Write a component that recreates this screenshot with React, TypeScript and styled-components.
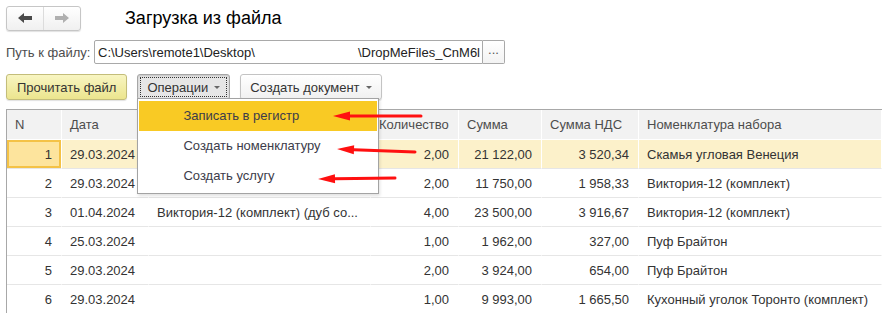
import styled, { createGlobalStyle } from "styled-components";

const GlobalStyle = createGlobalStyle`
  body {
    margin: 0;
    background: #fff;
    font-family: "Liberation Sans", Arial, sans-serif;
    font-size: 13px;
    color: #333;
  }
`;

const Page = styled.div`
  position: relative;
  width: 882px;
  height: 313px;
  overflow: hidden;
`;

const TopBar = styled.div`
  display: flex;
  align-items: center;
  height: 24px;
  padding: 6px 0 0 6px;
`;

const NavGroup = styled.div`
  display: flex;
  width: 73px;
  height: 23px;
  border: 1px solid #c6c6c6;
  border-radius: 3px;
  background: linear-gradient(#ffffff, #f0f0f0);
  box-shadow: 0 1px 1px rgba(0, 0, 0, 0.12);
`;

const NavButton = styled.div<{ $divider?: boolean }>`
  flex: 1;
  display: flex;
  align-items: center;
  justify-content: center;
  border-right: ${(p) => (p.$divider ? "1px solid #dcdcdc" : "none")};
`;

const Title = styled.h1`
  margin: 0 0 0 44px;
  font-size: 18px;
  font-weight: normal;
  color: #000;
  line-height: 24px;
`;

const PathRow = styled.div`
  display: flex;
  align-items: center;
  margin-top: 10px;
  padding-left: 6px;
  height: 24px;
`;

const Label = styled.span`
  color: #4d4d4d;
  width: 88px;
`;

const PathInput = styled.div`
  display: flex;
  justify-content: space-between;
  align-items: center;
  box-sizing: border-box;
  width: 389px;
  height: 24px;
  padding: 0 2px 0 3px;
  border: 1px solid #a9a9a9;
  border-radius: 2px 0 0 2px;
  color: #222;
  white-space: nowrap;
`;

const DotsButton = styled.div`
  box-sizing: border-box;
  width: 22px;
  height: 24px;
  border: 1px solid #a9a9a9;
  border-left: none;
  border-radius: 0 2px 2px 0;
  background: linear-gradient(#fff, #f3f3f3);
  text-align: center;
  line-height: 18px;
  color: #555;
`;

const ButtonsRow = styled.div`
  display: flex;
  align-items: center;
  gap: 10px;
  margin-top: 10px;
  padding-left: 6px;
  height: 26px;
`;

const Button = styled.div<{ $variant?: "primary" | "pressed" | "normal" }>`
  position: relative;
  box-sizing: border-box;
  height: 26px;
  display: flex;
  align-items: center;
  gap: 6px;
  padding: 0 ${(p) => (p.$variant === "primary" ? "10px" : "9px")};
  border-radius: 3px;
  border: 1px solid
    ${(p) => (p.$variant === "primary" ? "#c3bd7a" : p.$variant === "pressed" ? "#a6a6a6" : "#c3c3c3")};
  background: ${(p) =>
    p.$variant === "primary"
      ? "linear-gradient(#f8f5c2, #ece58e)"
      : p.$variant === "pressed"
      ? "#e6e6e6"
      : "linear-gradient(#ffffff, #f0f0f0)"};
  box-shadow: ${(p) => (p.$variant === "pressed" ? "inset 0 1px 2px rgba(0,0,0,0.15)" : "0 1px 1px rgba(0,0,0,0.12)")};
  color: #333;
  white-space: nowrap;
`;

const FocusFrame = styled.div`
  position: absolute;
  inset: 2px;
  border: 1px dotted #333;
  pointer-events: none;
`;

const Caret = styled.span`
  width: 0;
  height: 0;
  border-left: 3px solid transparent;
  border-right: 3px solid transparent;
  border-top: 3px solid #666;
  margin-top: 1px;
`;

const MenuAnchor = styled.div`
  position: relative;
`;

const Menu = styled.div`
  position: absolute;
  top: 24px;
  left: 0;
  z-index: 5;
  box-sizing: border-box;
  width: 242px;
  padding: 2px 1px;
  background: #fff;
  border: 1px solid #a3a3a3;
  box-shadow: 1px 2px 3px rgba(0, 0, 0, 0.12);
`;

const MenuItem = styled.div<{ $active?: boolean }>`
  height: 30px;
  line-height: 30px;
  padding-left: 44px;
  background: ${(p) => (p.$active ? "#f9ca24" : "transparent")};
  color: #3c3c4a;
`;

const Table = styled.table`
  margin: 9px 0 0 6px;
  width: 876px;
  table-layout: fixed;
  border-collapse: separate;
  border-spacing: 0;
  border-top: 1px solid #a8a8a8;
  border-left: 1px solid #a8a8a8;
`;

const HeadCell = styled.th`
  height: 30px;
  box-sizing: border-box;
  padding: 0 0 0 8px;
  background: #f2f2f2;
  border-right: 1px solid #ffffff;
  border-bottom: 1px solid #ffffff;
  font-weight: normal;
  text-align: left;
  color: #4d4d4d;
  white-space: nowrap;
  overflow: hidden;
`;

const Row = styled.tr<{ $selected?: boolean }>`
  background: ${(p) => (p.$selected ? "#fcf1ca" : "#fff")};
`;

const Cell = styled.td<{ $align?: "left" | "right"; $current?: boolean }>`
  height: 29px;
  box-sizing: border-box;
  padding: ${(p) => (p.$align === "right" ? "0 9px 0 0" : "0 0 0 8px")};
  text-align: ${(p) => p.$align ?? "left"};
  border-right: 1px solid #fff;
  border-bottom: 1px solid #e6e6e6;
  white-space: nowrap;
  overflow: hidden;
  color: #333;
  ${(p) =>
    p.$current &&
    `
    background: #fde49d;
    box-shadow: inset 0 0 0 2px #f4c246;
  `}
`;

const Annotations = styled.svg`
  position: absolute;
  left: 0;
  top: 0;
  z-index: 10;
  pointer-events: none;
`;

type RowData = {
  n: number;
  date: string;
  item: string;
  qty: string;
  sum: string;
  vat: string;
  kit: string;
};

const rows: RowData[] = [
  { n: 1, date: "29.03.2024", item: "", qty: "2,00", sum: "21 122,00", vat: "3 520,34", kit: "Скамья угловая Венеция" },
  { n: 2, date: "29.03.2024", item: "", qty: "2,00", sum: "11 750,00", vat: "1 958,33", kit: "Виктория-12 (комплект)" },
  { n: 3, date: "01.04.2024", item: "Виктория-12 (комплект) (дуб со...", qty: "4,00", sum: "23 500,00", vat: "3 916,67", kit: "Виктория-12 (комплект)" },
  { n: 4, date: "25.03.2024", item: "", qty: "1,00", sum: "1 962,00", vat: "327,00", kit: "Пуф Брайтон" },
  { n: 5, date: "29.03.2024", item: "", qty: "2,00", sum: "3 924,00", vat: "654,00", kit: "Пуф Брайтон" },
  { n: 6, date: "29.03.2024", item: "", qty: "1,00", sum: "9 993,00", vat: "1 665,50", kit: "Кухонный уголок Торонто (комплект)" },
];

const arrows = [
  { x1: 421, y1: 116, x2: 333, y2: 116 },
  { x1: 415, y1: 152, x2: 337, y2: 149 },
  { x1: 395, y1: 178, x2: 318, y2: 179 },
];

function Arrow({ x1, y1, x2, y2 }: { x1: number; y1: number; x2: number; y2: number }) {
  const ang = Math.atan2(y2 - y1, x2 - x1);
  const len = 17;
  const half = 4.5;
  const bx = x2 - Math.cos(ang) * len;
  const by = y2 - Math.sin(ang) * len;
  const px = -Math.sin(ang) * half;
  const py = Math.cos(ang) * half;
  return (
    <g>
      <line x1={x1} y1={y1} x2={bx} y2={by} stroke="#ff1010" strokeWidth={3} strokeLinecap="round" />
      <polygon points={`${x2},${y2} ${bx + px},${by + py} ${bx - px},${by - py}`} fill="#ff1010" />
    </g>
  );
}

export default function App() {
  return (
    <Page>
      <GlobalStyle />
      <TopBar>
        <NavGroup>
          <NavButton $divider>
            <svg width="14" height="10" viewBox="0 0 14 10">
              <polygon points="0,5 6,0 6,3 14,3 14,7 6,7 6,10" fill="#4a4a4a" />
            </svg>
          </NavButton>
          <NavButton>
            <svg width="14" height="10" viewBox="0 0 14 10">
              <polygon points="14,5 8,0 8,3 0,3 0,7 8,7 8,10" fill="#b0b0b0" />
            </svg>
          </NavButton>
        </NavGroup>
        <Title>Загрузка из файла</Title>
      </TopBar>

      <PathRow>
        <Label>Путь к файлу:</Label>
        <PathInput>
          <span>C:\Users\remote1\Desktop\</span>
          <span>\DropMeFiles_CnM6l</span>
        </PathInput>
        <DotsButton>...</DotsButton>
      </PathRow>

      <ButtonsRow>
        <Button $variant="primary">Прочитать файл</Button>
        <MenuAnchor>
          <Button $variant="pressed">
            <FocusFrame />
            Операции <Caret />
          </Button>
          <Menu>
            <MenuItem $active>Записать в регистр</MenuItem>
            <MenuItem>Создать номенклатуру</MenuItem>
            <MenuItem>Создать услугу</MenuItem>
          </Menu>
        </MenuAnchor>
        <Button>
          Создать документ <Caret />
        </Button>
      </ButtonsRow>

      <Table>
        <colgroup>
          <col style={{ width: 55 }} />
          <col style={{ width: 87 }} />
          <col style={{ width: 222 }} />
          <col style={{ width: 88 }} />
          <col style={{ width: 83 }} />
          <col style={{ width: 97 }} />
          <col />
        </colgroup>
        <thead>
          <tr>
            <HeadCell>N</HeadCell>
            <HeadCell>Дата</HeadCell>
            <HeadCell />
            <HeadCell>Количество</HeadCell>
            <HeadCell>Сумма</HeadCell>
            <HeadCell>Сумма НДС</HeadCell>
            <HeadCell>Номенклатура набора</HeadCell>
          </tr>
        </thead>
        <tbody>
          {rows.map((r) => (
            <Row key={r.n} $selected={r.n === 1}>
              <Cell $align="right" $current={r.n === 1}>{r.n}</Cell>
              <Cell>{r.date}</Cell>
              <Cell>{r.item}</Cell>
              <Cell $align="right">{r.qty}</Cell>
              <Cell $align="right">{r.sum}</Cell>
              <Cell $align="right">{r.vat}</Cell>
              <Cell>{r.kit}</Cell>
            </Row>
          ))}
        </tbody>
      </Table>

      <Annotations width="882" height="313">
        {arrows.map((a, i) => (
          <Arrow key={i} {...a} />
        ))}
      </Annotations>
    </Page>
  );
}
